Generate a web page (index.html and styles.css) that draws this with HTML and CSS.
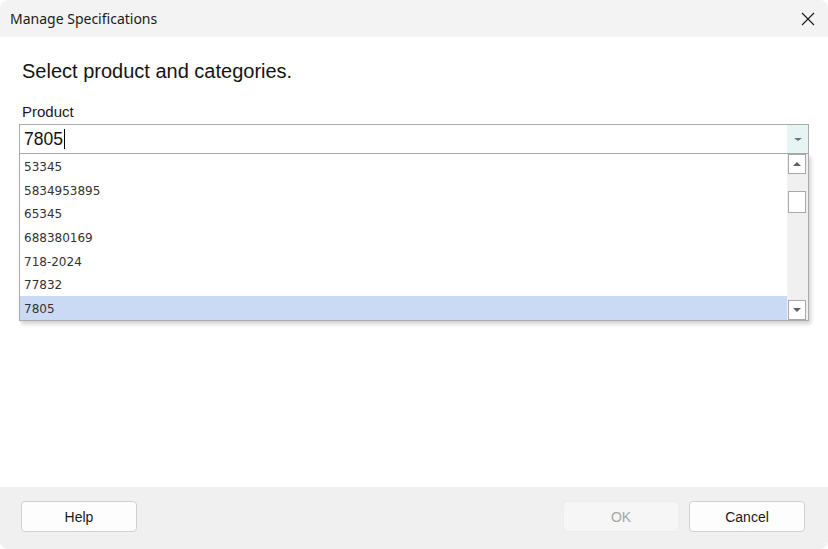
FILE: index.html
```html
<!DOCTYPE html>
<html>
<head>
<meta charset="utf-8">
<link rel="stylesheet" href="styles.css">
</head>
<body>
<div class="window">
  <div class="titlebar">
    <span class="title">Manage Specifications</span>
    <span class="close">
      <svg width="14" height="14" viewBox="0 0 14 14"><path d="M1 1 L13 13 M13 1 L1 13" stroke="#1a1a1a" stroke-width="1.1" fill="none"/></svg>
    </span>
  </div>
  <div class="content">
    <h1 class="heading">Select product and categories.</h1>
    <div class="label">Product</div>
    <div class="combo">
      <div class="combo-text">7805<span class="caret"></span></div>
      <div class="combo-btn"><span class="tri-down small"></span></div>
    </div>
    <div class="list">
      <div class="rows">
        <div class="row">53345</div>
        <div class="row">5834953895</div>
        <div class="row">65345</div>
        <div class="row">688380169</div>
        <div class="row">718-2024</div>
        <div class="row">77832</div>
        <div class="row selected">7805</div>
      </div>
      <div class="scrollbar">
        <div class="sb-btn"><span class="tri-up"></span></div>
        <div class="sb-thumb"></div>
        <div class="sb-spacer"></div>
        <div class="sb-btn"><span class="tri-down"></span></div>
      </div>
    </div>
  </div>
  <div class="footer">
    <button class="btn">Help</button>
    <div class="footer-right">
      <button class="btn disabled">OK</button>
      <button class="btn">Cancel</button>
    </div>
  </div>
</div>
</body>
</html>
```

FILE: styles.css
```css
html, body {
  margin: 0;
  padding: 0;
  background: #ffffff;
}
.window {
  width: 828px;
  height: 549px;
  display: flex;
  flex-direction: column;
  border-radius: 8px;
  overflow: hidden;
  background: #ffffff;
  box-sizing: border-box;
  font-family: "Liberation Sans", Arial, sans-serif;
}
.titlebar {
  height: 37px;
  flex: 0 0 37px;
  background: #f3f3f3;
  display: flex;
  align-items: center;
  justify-content: space-between;
  padding: 0 13px 0 10px;
}
.title {
  font-family: "Noto Sans", sans-serif;
  font-size: 14px;
  color: #1a1a1a;
  padding-bottom: 1px;
}
.close {
  display: flex;
  width: 14px;
  height: 14px;
  margin-top: 0px;
}
.content {
  flex: 1;
  padding: 22px 19px 0 19px;
  display: flex;
  flex-direction: column;
}
.heading {
  margin: 0 0 0 3px;
  font-weight: normal;
  font-size: 20px;
  line-height: 24px;
  color: #141414;
}
.label {
  margin: 20px 0 0 3px;
  font-size: 15px;
  line-height: 18px;
  color: #1a1a1a;
}
.combo {
  margin-top: 3px;
  height: 30px;
  box-sizing: border-box;
  border: 1px solid #ababab;
  display: flex;
  align-items: stretch;
}
.combo-text {
  flex: 1;
  display: flex;
  align-items: center;
  padding-left: 4px;
  font-size: 17.5px;
  color: #111;
}
.caret {
  display: inline-block;
  width: 1px;
  height: 20px;
  background: #000;
  margin-left: 1px;
}
.combo-btn {
  width: 21px;
  background: #e6f4f4;
  display: flex;
  align-items: center;
  justify-content: center;
}
.tri-down {
  width: 0;
  height: 0;
  border-left: 4px solid transparent;
  border-right: 4px solid transparent;
  border-top: 4px solid #606060;
}
.tri-down.small {
  border-left-width: 4px;
  border-right-width: 4px;
  border-top-width: 3px;
  border-top-color: #707070;
}
.tri-up {
  width: 0;
  height: 0;
  border-left: 4px solid transparent;
  border-right: 4px solid transparent;
  border-bottom: 4px solid #606060;
}
.list {
  height: 167px;
  box-sizing: border-box;
  border: 1px solid #ababab;
  border-top: none;
  display: flex;
  box-shadow: 2px 3px 4px rgba(0, 0, 0, 0.18);
}
.rows {
  flex: 1;
  display: flex;
  flex-direction: column;
}
.row {
  height: 23.7px;
  box-sizing: border-box;
  padding: 2px 0 0 4px;
  display: flex;
  align-items: center;
  font-family: "DejaVu Sans", Verdana, sans-serif;
  font-size: 12px;
  color: #333;
}
.row.selected {
  background: #cbdaf4;
}
.scrollbar {
  width: 21px;
  background: #f0f0f0;
  display: flex;
  flex-direction: column;
  align-items: flex-start;
}
.sb-btn {
  width: 18px;
  height: 20px;
  box-sizing: border-box;
  border: 1px solid #a8a8a8;
  background: #ffffff;
  margin-left: 1px;
  display: flex;
  align-items: center;
  justify-content: center;
}
.sb-thumb {
  width: 18px;
  height: 22px;
  box-sizing: border-box;
  border: 1px solid #a8a8a8;
  background: #ffffff;
  margin: 17px 0 0 1px;
}
.sb-spacer {
  flex: 1;
}
.footer {
  height: 62px;
  flex: 0 0 62px;
  background: #f0f0f0;
  display: flex;
  justify-content: space-between;
  align-items: flex-start;
  padding: 14px 23px 0 21px;
  box-sizing: border-box;
}
.footer-right {
  display: flex;
  gap: 10px;
}
.btn {
  width: 116px;
  height: 31px;
  box-sizing: border-box;
  border: 1px solid #d0d0d0;
  border-radius: 4px;
  background: #fdfdfd;
  font-family: "Liberation Sans", Arial, sans-serif;
  font-size: 14px;
  color: #1a1a1a;
  padding: 0;
}
.btn.disabled {
  background: #f6f6f6;
  border-color: #ececec;
  color: #a6a6a6;
}
```
